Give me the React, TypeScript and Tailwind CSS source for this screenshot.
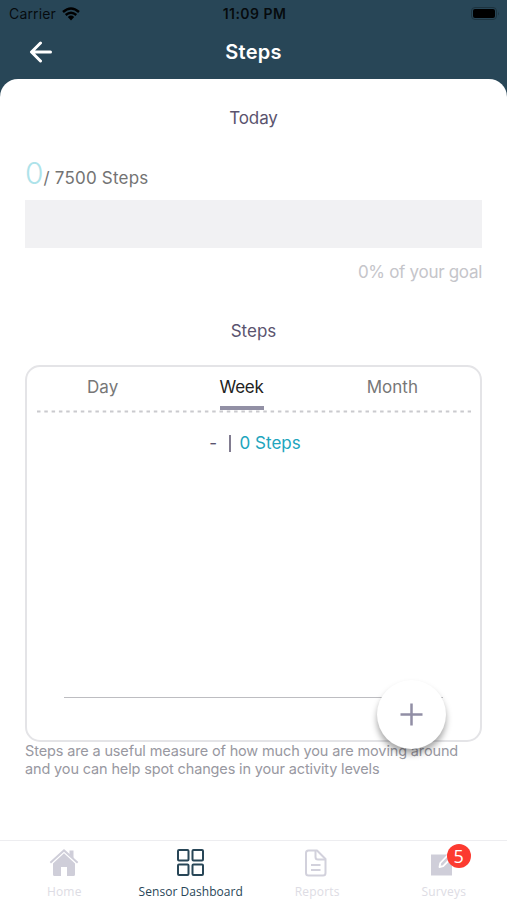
import { ReactNode } from "react";
import clsx from "clsx";

const tabs = [
  { title: "Day", width: "w-[152px]" },
  { title: "Week", width: "w-[127px]" },
  { title: "Month", width: "w-[176px]" },
];

const HomeIcon = () => (
  <svg width="30" height="30" viewBox="0 0 30 30" fill="#cfced9">
    <path d="M20.5 2.500h4v8l-4-4z" />
    <path d="M15 1 29.300 14l-1.300 1.400L15 3.800 2 15.400.7 14z" />
    <path d="M15 5.300 26 15.500v11q0 1.500-1.500 1.500H18v-9h-6v9H5.500Q4 28 4 26.500v-11z" />
  </svg>
);

const DashboardIcon = () => (
  <svg
    width="30"
    height="30"
    viewBox="0 0 30 30"
    fill="none"
    stroke="#284657"
    strokeWidth="2"
  >
    <rect x="2" y="2" width="10.500" height="10.500" rx="1" />
    <rect x="16.500" y="2" width="10.500" height="10.500" rx="1" />
    <rect x="2" y="16.500" width="10.500" height="10.500" rx="1" />
    <rect x="16.500" y="16.500" width="10.500" height="10.500" rx="1" />
  </svg>
);

const ReportsIcon = () => (
  <svg
    width="30"
    height="30"
    viewBox="0 0 30 30"
    fill="none"
    stroke="#d2d1dc"
    strokeWidth="2"
    strokeLinejoin="round"
  >
    <path d="M6.500 2.500H15l8.500 8.500v14q0 2.500-2.500 2.500H6.500Q4 27.500 4 25V5q0-2.500 2.500-2.500z" />
    <path d="M13.500 2.500V9q0 2.500 2.500 2.500h7M9 17h9.500M9 22h9.500" />
  </svg>
);

const SurveysIcon = () => (
  <svg width="30" height="30" viewBox="0 0 30 30">
    <path d="M2 6.500H23v21H2z" fill="#cfced9" />
    <path
      d="m10.500 19 .8-4L19.500 6.500l3.200 3-8.500 8.700z"
      fill="#cfced9"
      stroke="#fff"
      strokeWidth="1.8"
      strokeLinejoin="round"
    />
  </svg>
);

interface NavItemProps {
  title: string;
  icon: ReactNode;
  active?: boolean;
  badge?: number;
}

const NavItem = ({ title, icon, active, badge }: NavItemProps) => (
  <div className="flex flex-1 flex-col items-center pt-[7px]">
    <div className="relative">
      {icon}
      {badge && (
        <span className="absolute -top-[4px] left-[18px] flex h-6 w-6 items-center justify-center rounded-full bg-[#fc3a30] text-[18px] leading-none text-white">
          {badge}
        </span>
      )}
    </div>
    <span
      className={clsx(
        "mt-[6px] text-[12px] leading-4 whitespace-nowrap",
        active
          ? "text-[#284657] tracking-[0.05px]"
          : "text-[#dddce4] tracking-[0.2px]"
      )}
    >
      {title}
    </span>
  </div>
);

const StatusBar = () => (
  <div className="grid h-[27px] grid-cols-3 items-center pr-[7px] pl-[9px] text-black/85">
    <div className="flex items-center gap-[6px]">
      <span className="text-[14px] tracking-[0.15px]">Carrier</span>
      <svg width="18" height="14" viewBox="0 0 18 14" fill="none" stroke="black">
        <path d="M1 5Q9-2.200 17 5M3.700 8q5.300-4.600 10.600 0" strokeWidth="2.400" />
        <path d="M5.800 10q3.200-2.800 6.400 0L9 13.500z" fill="black" stroke="none" />
      </svg>
    </div>
    <span className="text-center text-[14px] font-semibold tracking-[0.45px]">
      11:09 PM
    </span>
    <svg
      className="justify-self-end"
      width="29"
      height="14"
      viewBox="0 0 29 14"
    >
      <rect x="0.500" y="0.500" width="25" height="12" rx="3.500" fill="none" stroke="#1d333f" />
      <rect x="2" y="2" width="22" height="9" rx="2" fill="black" />
      <path d="M27 4.500q1.500 2 0 4z" fill="#1d333f" />
    </svg>
  </div>
);

export default function App() {
  return (
    <div className="flex h-[900px] w-[507px] flex-col overflow-hidden bg-[#284657] font-['Inter','Liberation_Sans',sans-serif]">
      <StatusBar />
      <header className="grid h-[52px] grid-cols-3 items-center pb-[2px] pl-[29px]">
        <svg
          width="24"
          height="22"
          viewBox="0 0 24 22"
          fill="none"
          stroke="white"
          strokeWidth="3"
          strokeLinecap="round"
          strokeLinejoin="round"
        >
          <path d="M21.500 11H3M11.500 2 2.500 11l9 9" />
        </svg>
        <h1 className="-ml-[29px] text-center text-[20px] font-semibold tracking-[0.3px] text-white">
          Steps
        </h1>
      </header>

      <main className="flex-1 rounded-t-[18px] bg-white px-[25px]">
        <h2 className="pt-[27px] text-center text-[17px] leading-6 tracking-[-0.1px] text-[#5a536e]">
          Today
        </h2>
        <div className="mt-[25px] flex h-[36px] items-baseline text-[17px] leading-9 text-[#737373]">
          <span className="text-[30px] font-light text-[#aee3ea]">0</span>
          <span className="tracking-[0.2px]">/ 7500 Steps</span>
        </div>
        <div className="mt-[9px] h-[48px] bg-[#f1f1f3]" />
        <p className="mt-[12px] text-right text-[17px] leading-6 tracking-[-0.3px] text-[#c5c5ca]">
          0% of your goal
        </p>

        <h2 className="mt-[35px] text-center text-[17px] leading-6 text-[#5a536e]">
          Steps
        </h2>
        <section className="relative mt-[22px] h-[377px] rounded-[15px] border-2 border-[#e4e4e7]">
          <div className="flex">
            {tabs.map(({ title, width }) => (
              <div key={title} className={clsx("flex h-[43px] justify-center", width)}>
                <span
                  className={clsx(
                    "pt-[8px] text-[17px] leading-6",
                    title === "Week"
                      ? "border-b-4 border-[#9290a5] tracking-[-0.25px] text-[#222]"
                      : "text-[#777]"
                  )}
                >
                  {title}
                </span>
              </div>
            ))}
          </div>
          <svg className="ml-[9px] block" width="436" height="3">
            <path
              d="M1 1.500H435"
              stroke="#cacace"
              strokeWidth="2"
              strokeDasharray="3.500 3.800"
            />
          </svg>
          <div className="mt-[18px] flex items-center justify-center pl-[3px] text-[17px] leading-6 text-[#5a536e]">
            <span>-</span>
            <span className="mr-[9px] ml-[12px] h-[17px] w-[1.500px] bg-[#817c90]" />
            <span className="text-[#20a5bd]">0 Steps</span>
          </div>
          <div className="mx-[37px] mt-[242px] h-px bg-[#bdbdc1]" />
          <button className="absolute top-[313px] left-[350px] flex h-[69px] w-[69px] items-center justify-center rounded-full bg-white shadow-[0_5px_6px_rgba(0,0,0,0.35)]">
            <svg width="23" height="23" stroke="#918ea5" strokeWidth="2.500">
              <path d="M11.500 0.500v22M0.500 11.500h22" />
            </svg>
          </button>
        </section>
        <p className="text-[14.500px] leading-[18px] tracking-[-0.14px] text-[#9898a1]">
          Steps are a useful measure of how much you are moving around
          <br />
          and you can help spot changes in your activity levels
        </p>
      </main>

      <nav className="flex h-[60px] border-t border-[#ededf0] bg-white pl-px font-['Open_Sans','Noto_Sans',sans-serif]">
        <NavItem title="Home" icon={<HomeIcon />} />
        <NavItem title="Sensor Dashboard" icon={<DashboardIcon />} active />
        <NavItem title="Reports" icon={<ReportsIcon />} />
        <NavItem title="Surveys" icon={<SurveysIcon />} badge={5} />
      </nav>
    </div>
  );
}
